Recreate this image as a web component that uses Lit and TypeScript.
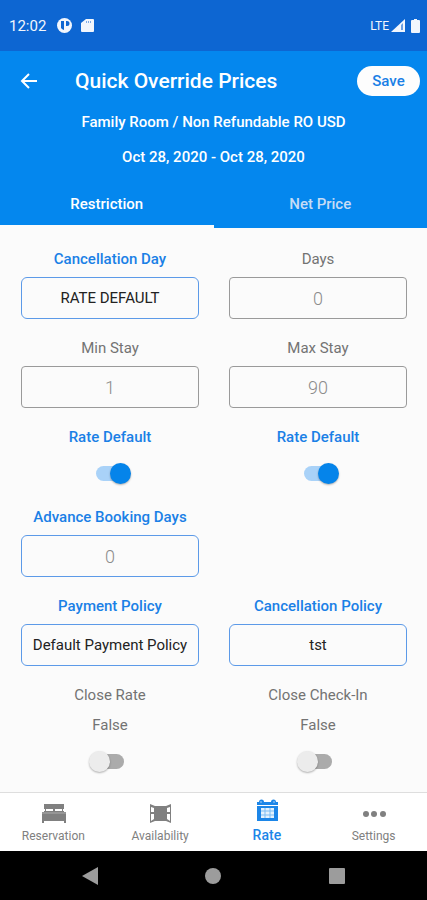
import { LitElement, html, css, svg, nothing } from "lit";
import { customElement, property, state } from "lit/decorators.js";
import { classMap } from "lit/directives/class-map.js";

type Kind = "select" | "number" | "switch";

interface Field {
  id: string;
  label: string;
  kind: Kind;
  value?: string;
  caption?: string;
  on?: boolean;
  accent?: boolean;
}

const ROWS: Field[][] = [
  [
    { id: "cancellation-day", label: "Cancellation Day", kind: "select", value: "RATE DEFAULT", accent: true },
    { id: "days", label: "Days", kind: "number", value: "0" },
  ],
  [
    { id: "min-stay", label: "Min Stay", kind: "number", value: "1" },
    { id: "max-stay", label: "Max Stay", kind: "number", value: "90" },
  ],
  [
    { id: "min-default", label: "Rate Default", kind: "switch", on: true, accent: true },
    { id: "max-default", label: "Rate Default", kind: "switch", on: true, accent: true },
  ],
  [{ id: "advance", label: "Advance Booking Days", kind: "number", value: "0", accent: true }],
  [
    { id: "payment", label: "Payment Policy", kind: "select", value: "Default Payment Policy", accent: true },
    { id: "cancellation", label: "Cancellation Policy", kind: "select", value: "tst", accent: true },
  ],
  [
    { id: "close-rate", label: "Close Rate", kind: "switch", caption: "False" },
    { id: "close-checkin", label: "Close Check-In", kind: "switch", caption: "False" },
  ],
];

const bedIcon = svg`
  <path d="M4 2h20v5h-1v2h1v1H4V9h1V7H4z"/>
  <path d="M6 7h7v2H6zM15 7h7v2h-7z" fill="#fff"/>
  <path d="M2 10h24v11h-2v-2H4v2H2z"/>
  <path d="M2 11h24" stroke="#fff" stroke-opacity=".35" fill="none"/>`;

const windowIcon = svg`
  <path d="M8 4h11v15H8z"/>
  <path d="M3 2l5 2v15l-5 2zM24 2l-5 2v15l5 2z"/>
  <path d="M4 5l3 1v4H4zM23 5l-3 1v4h3zM4 12h3v5l-3 2zM23 12h-3v5l3 2z" fill="#fff"/>`;

const calendarIcon = svg`
  <path d="M3 3h2a2 2 0 0 1 5 0h7a2 2 0 0 1 5 0h2v3H3z"/>
  <path d="M6 3h2M19 3h2" stroke="#fff" stroke-opacity=".6"/>
  <path d="M3 7h21v15H3z"/>
  <path d="M7 9h13v10H7z" fill="#e4f2fd"/>
  <path d="M7 12h13M7 16h13M11 9v10M16 9v10" stroke="#7cbdf3" fill="none"/>`;

const dotsIcon = svg`
  <circle cx="5" cy="12" r="3"/><circle cx="13" cy="12" r="3"/><circle cx="22" cy="12" r="3"/>`;

const NAV = [
  { label: "Reservation", icon: bedIcon },
  { label: "Availability", icon: windowIcon },
  { label: "Rate", icon: calendarIcon, active: true },
  { label: "Settings", icon: dotsIcon },
];

@customElement("rate-field")
class RateField extends LitElement {
  @property({ attribute: false }) field!: Field;

  static styles = css`
    :host {
      display: flex;
      flex-direction: column;
      align-items: center;
      gap: 6px;
      min-width: 0;
      color: #737373;
      font: 400 15px/24px Roboto, sans-serif;
    }
    .accent {
      color: #1a80e6;
      font-weight: 500;
    }
    .box {
      box-sizing: border-box;
      width: 100%;
      height: 42px;
      margin: 0;
      padding: 0 4px;
      border: 1px solid #9a9a9a;
      border-radius: 4px;
      background: #fbfbfb;
      color: #8c8c8c;
      font: 300 18px/24px Roboto, sans-serif;
      text-align: center;
      text-align-last: center;
      appearance: none;
    }
    .box.outlined {
      border-color: #5c9ae8;
      border-radius: 6px;
    }
    .box.choice {
      color: #222;
      font-size: 15px;
      font-weight: 400;
    }
    .switch {
      box-sizing: border-box;
      height: 33px;
      padding-top: 4px;
      display: flex;
      align-items: center;
    }
    .track {
      appearance: none;
      position: relative;
      width: 28px;
      height: 15px;
      margin: 0;
      border-radius: 8px;
      background: #ababab;
    }
    .track::before {
      content: "";
      position: absolute;
      top: -3px;
      left: -7px;
      width: 21px;
      height: 21px;
      border-radius: 50%;
      background: #ececec;
      box-shadow: 0 1px 2px rgba(0, 0, 0, 0.3);
    }
    .track:checked {
      background: #a9d2f8;
    }
    .track:checked::before {
      left: 14px;
      background: #0584ea;
    }
  `;

  private control() {
    const f = this.field;
    if (f.kind === "switch") {
      return html`<div class="switch">
        <input class="track" id=${f.id} type="checkbox" role="switch" ?checked=${f.on} />
      </div>`;
    }
    if (f.kind === "select") {
      return html`<select class="box outlined choice" id=${f.id}>
        <option>${f.value}</option>
      </select>`;
    }
    return html`<input
      class=${classMap({ box: true, outlined: !!f.accent })}
      id=${f.id}
      inputmode="numeric"
      .value=${f.value ?? ""}
    />`;
  }

  render() {
    const f = this.field;
    return html`
      <label class=${classMap({ accent: !!f.accent })} for=${f.id}>${f.label}</label>
      ${f.caption ? html`<span>${f.caption}</span>` : nothing} ${this.control()}
    `;
  }
}

@customElement("app-root")
class AppRoot extends LitElement {
  @state() private tab = "Restriction";

  static styles = css`
    :host {
      display: flex;
      flex-direction: column;
      min-height: 100vh;
      background: #fbfbfb;
      font-family: Roboto, sans-serif;
    }
    button {
      margin: 0;
      padding: 0;
      border: 0;
      background: none;
      color: inherit;
      font: inherit;
    }
    svg {
      display: block;
      fill: currentColor;
    }
    .status {
      display: flex;
      align-items: center;
      height: 51px;
      padding: 0 7px 0 9px;
      background: #0d66d2;
      color: #f1f6fd;
      font-size: 15px;
    }
    .notices {
      display: flex;
      gap: 9px;
      margin: 0 auto 0 11px;
    }
    .signal {
      display: flex;
      align-items: center;
      gap: 2px;
      font-size: 12px;
    }
    .battery {
      margin-left: 4px;
    }
    .header {
      background: #0487ee;
      color: #fff;
      text-align: center;
    }
    .bar {
      display: flex;
      align-items: center;
      height: 59px;
      padding: 0 7px 0 18px;
    }
    .title {
      flex: 1;
      margin: 0 0 0 35px;
      font-size: 21px;
      font-weight: 500;
      text-align: left;
      white-space: nowrap;
    }
    .save {
      width: 63px;
      height: 30px;
      border-radius: 15px;
      background: #fdfdfd;
      color: #1a80e6;
      font-size: 15px;
      font-weight: 500;
    }
    .info {
      margin: 0;
      padding-bottom: 11px;
      font-size: 15px;
      font-weight: 500;
      line-height: 24px;
    }
    .tabs {
      display: grid;
      grid-template-columns: 1fr 1fr;
    }
    .tab {
      height: 48px;
      padding-top: 2px;
      border-bottom: 3px solid transparent;
      color: #c6dcf5;
      font-size: 15px;
      font-weight: 500;
    }
    .tab.current {
      border-color: #fbfbfb;
      color: #fff;
    }
    .form {
      flex: 1;
      display: flex;
      flex-direction: column;
      gap: 17px;
      padding: 19px 20px 14px 21px;
    }
    .row {
      display: grid;
      grid-template-columns: 1fr 1fr;
      gap: 30px;
    }
    .nav {
      display: grid;
      grid-template-columns: repeat(4, 1fr);
      height: 58px;
      border-top: 1px solid #dedede;
      background: #fff;
    }
    .item {
      display: flex;
      flex-direction: column;
      align-items: center;
      gap: 2px;
      padding-top: 9px;
      color: #808080;
      font-size: 12px;
      line-height: 16px;
      text-decoration: none;
    }
    .item.active {
      padding-top: 6px;
      gap: 4px;
      color: #1c86e8;
      font-size: 14px;
      font-weight: 500;
    }
    .keys {
      display: grid;
      grid-template-columns: repeat(3, 1fr);
      place-items: center;
      height: 49px;
      padding: 0 28px;
      background: #000;
      color: #9c9c9c;
    }
  `;

  render() {
    return html`
      <div class="status">
        <span>12:02</span>
        <div class="notices">
          <svg width="15" height="15" viewBox="0 0 15 15">
            <circle cx="7.5" cy="7.5" r="7.5" />
            <path d="M4 3h3v9a5 5 0 0 1-3-2zM9 3h1a2 2 0 0 1 0 5H9z" fill="#0d66d2" />
          </svg>
          <svg width="13" height="15" viewBox="0 0 13 15">
            <path d="M5 1h7a1 1 0 0 1 1 1v11a1 1 0 0 1-1 1H1a1 1 0 0 1-1-1V5z" />
            <path d="M5 3h1v2H5zM7 3h1v2H7zM9 3h1v2H9z" fill="#7fabe5" />
          </svg>
        </div>
        <div class="signal">
          <span>LTE</span>
          <svg width="14" height="13" viewBox="0 0 14 13">
            <path d="M0 13L14 0v13z" />
            <path d="M10 6l2-2v7h-2z" fill="#6a9fe2" />
          </svg>
          <svg class="battery" width="9" height="14" viewBox="0 0 9 14">
            <path d="M3 0h3v1h2a1 1 0 0 1 1 1v11a1 1 0 0 1-1 1H1a1 1 0 0 1-1-1V2a1 1 0 0 1 1-1h2z" />
          </svg>
        </div>
      </div>

      <header class="header">
        <div class="bar">
          <button aria-label="Back">
            <svg width="22" height="22" viewBox="0 0 22 22">
              <path d="M19 11H4M11 4l-7 7 7 7" fill="none" stroke="currentColor" stroke-width="2" />
            </svg>
          </button>
          <h1 class="title">Quick Override Prices</h1>
          <button class="save">Save</button>
        </div>
        <p class="info">Family Room / Non Refundable RO USD</p>
        <p class="info">Oct 28, 2020 - Oct 28, 2020</p>
        <div class="tabs" role="tablist">
          ${["Restriction", "Net Price"].map(
            (name) => html`<button
              class=${classMap({ tab: true, current: this.tab === name })}
              role="tab"
              aria-selected=${this.tab === name ? "true" : "false"}
              @click=${() => (this.tab = name)}
            >
              ${name}
            </button>`
          )}
        </div>
      </header>

      <main class="form">
        ${ROWS.map(
          (row) => html`<div class="row">
            ${row.map((field) => html`<rate-field .field=${field}></rate-field>`)}
          </div>`
        )}
      </main>

      <nav class="nav">
        ${NAV.map(
          (n) => html`<a class=${classMap({ item: true, active: !!n.active })} href="#">
            <svg width="26" height="24" viewBox="0 0 26 24">${n.icon}</svg>
            <span>${n.label}</span>
          </a>`
        )}
      </nav>

      <div class="keys">
        <button aria-label="System back">
          <svg width="16" height="18" viewBox="0 0 16 18"><path d="M16 0v18L0 9z" /></svg>
        </button>
        <button aria-label="Home">
          <svg width="16" height="16" viewBox="0 0 16 16"><circle cx="8" cy="8" r="8" /></svg>
        </button>
        <button aria-label="Recent apps">
          <svg width="16" height="16" viewBox="0 0 16 16"><rect width="16" height="16" rx="1" /></svg>
        </button>
      </div>
    `;
  }
}
